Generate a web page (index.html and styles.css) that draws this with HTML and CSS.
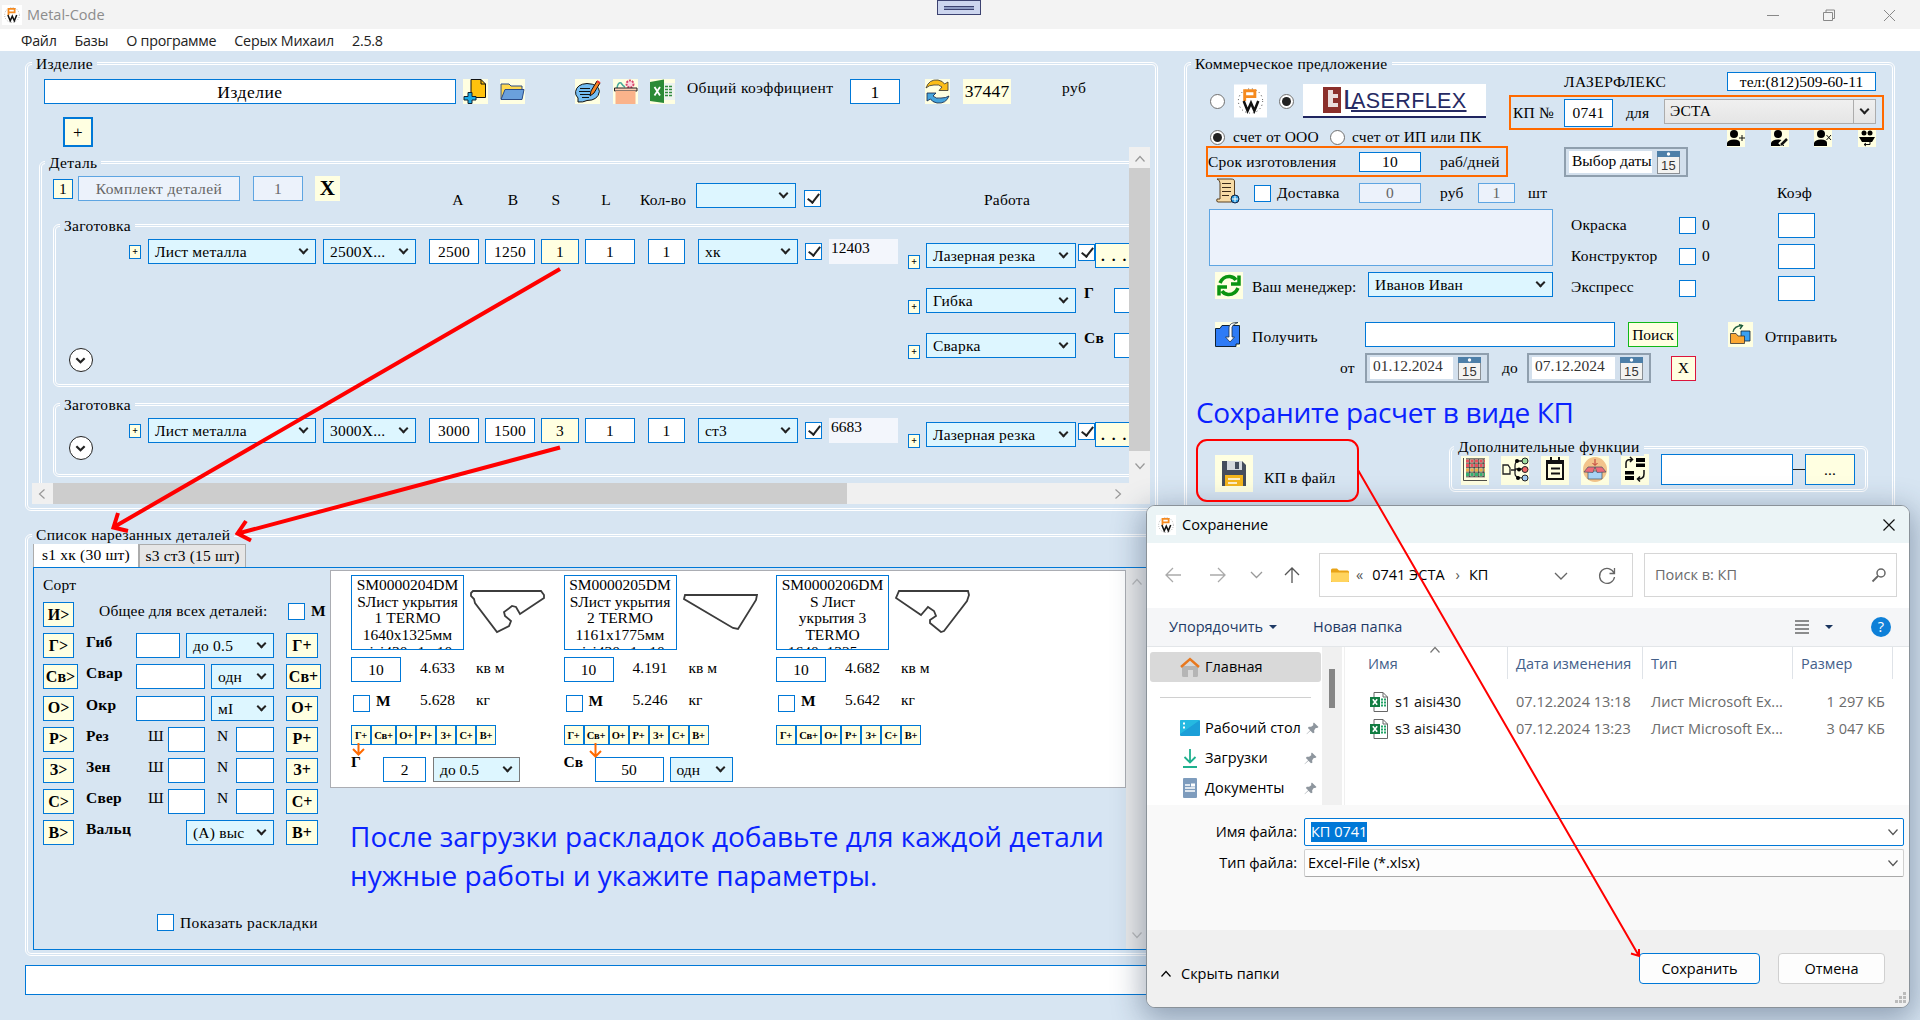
FILE: index.html
```html
<!DOCTYPE html>
<html lang="ru">
<head>
<meta charset="utf-8">
<title>Metal-Code</title>
<link rel="stylesheet" href="styles.css">
</head>
<body>
<svg class="defs" width="0" height="0">
  <defs>
    <symbol id="pw" viewBox="0 0 34 34">
      <rect width="34" height="34" fill="#fff"/>
      <circle cx="17" cy="17" r="12.500" fill="none" stroke="#333" stroke-width="1" stroke-dasharray="1 3"/>
      <path d="M11 17V6.500H21.500V12.500H11" fill="none" stroke="#f58a1f" stroke-width="3"/>
      <path d="M10 17L14 27L17.500 19L21 27L25 17" fill="none" stroke="#111" stroke-width="2.600"/>
    </symbol>
    <symbol id="chev" viewBox="0 0 12 12"><path d="M1.500 3.500L6 8.500L10.500 3.500" fill="none" stroke="currentColor" stroke-width="1.200"/></symbol>
    <symbol id="chev-bold" viewBox="0 0 12 12"><path d="M1.500 4L6 8.500L10.500 4" fill="none" stroke="#222" stroke-width="2.400"/></symbol>
    <symbol id="cal" viewBox="0 0 23 23">
      <rect x=".5" y="3" width="22" height="19.500" fill="#f3f3f1" stroke="#8a8f94"/>
      <rect width="23" height="6" fill="#4d7fa8"/><circle cx="11.500" cy="3" r="1.700" fill="#fff"/>
      <text x="11.500" y="19" text-anchor="middle" class="caltext">15</text>
    </symbol>
    <symbol id="xls" viewBox="0 0 20 20">
      <path d="M4 .5H13L17.500 5V19.500H4Z" fill="#fff" stroke="#666"/><path d="M13 .5V5H17.500" fill="none" stroke="#666"/>
      <path d="M11 7.500H16M11 10.500H16M11 13.500H16" stroke="#21a366" stroke-width="2" stroke-dasharray="2 1"/>
      <rect y="5" width="10" height="10" fill="#107c41"/><path d="M2.800 7.300L7.200 12.700M7.200 7.300L2.800 12.700" stroke="#fff" stroke-width="1.600"/>
    </symbol>
    <symbol id="pin" viewBox="0 0 14 14"><path d="M8.500 .5L13.500 5.500L12 6.500L10.500 6.500L8.800 9L9 11.500L7.500 12L4.700 9.300L1 13L.5 13.300L1 12.500L4.500 9L2 6.500L3 5L5.500 5.200L7.800 3.500L7.700 1.500Z" fill="#8e969e"/></symbol>
    <symbol id="man" viewBox="0 0 18 17"><rect width="18" height="17" fill="#ffffe1"/><circle cx="7" cy="4" r="4"/><path d="M0 16V13Q1 9.500 7 9.500T13 13V16Z"/></symbol>
  </defs>
</svg>

<header class="titlebar">
  <svg class="i20"><use href="#pw"/></svg><span class="app-name">Metal-Code</span>
  <div class="grip"><i></i></div>
  <svg class="wincontrols" viewBox="0 0 134 14"><path d="M2 7.500H14M58.500 4.500H67.500V12.500H58.500ZM61 4V2H69.500V10.500H68M119 2L130 13M130 2L119 13" fill="none" stroke="#888"/></svg>
</header>
<nav class="menubar"><span>Файл</span><span>Базы</span><span>О программе</span><span>Серых Михаил</span><span>2.5.8</span></nav>

<main class="workspace">
  <div class="left">
    <section class="group product">
      <h2 class="legend">Изделие</h2>
      <div class="row toolbar">
        <div class="in w412 big">Изделие</div>
        <svg class="i25" viewBox="0 0 25 25"><rect width="25" height="25" fill="#ffffe1"/><path d="M8 .5H18L22.500 5V18.500H8Z" fill="#ffc20e" stroke="#111"/><path d="M18 .5V5H22.500" fill="none" stroke="#111"/><path d="M5 13.500H9V17.500H13V21H9V24.500H5V21H1V17.500H5Z" fill="#19a9e5" stroke="#123"/></svg>
        <svg class="i25" viewBox="0 0 25 25"><rect width="25" height="25" fill="#ffffe1"/><path d="M1 20V5H9L11 7H22V11" fill="#ffd84f" stroke="#2a4a86"/><path d="M1 20.500L5 10.500H24L22 20.500Z" fill="#6aa0dc" stroke="#2a4a86"/></svg>
        <svg class="i25" viewBox="0 0 25 25"><rect width="25" height="25" fill="#ffffe1"/><path d="M3 23V19Q0 16 .6 12.500Q2 5 12 4.500Q24 5 24.400 12.500Q23 21.500 12 21.500Q8 23.500 3 23Z" fill="#74bdf3" stroke="#111"/><path d="M5 9.500H15M4 12.500H15M5 15.500H15M7 18.500H14" stroke="#111"/><path d="M15 17L16 12L22 2L25 4L19 14Z" fill="#f58220" stroke="#111"/><path d="M22 2L25 4" stroke="#e33" stroke-width="2"/></svg>
        <svg class="i25" viewBox="0 0 25 25"><rect width="25" height="25" fill="#ffffe1"/><path d="M4 9Q5 3 8 4Q10 7 12 8" fill="none" stroke="#47a99a" stroke-width="1.500"/><circle cx="17" cy="5" r="3.500" fill="#fbd5df" stroke="#d8456a" stroke-width="2" stroke-dasharray="2 1"/><path d="M1.500 9H24V12H1.500Z" fill="#fbd0b8" stroke="#222"/><rect x="2.500" y="12" width="20" height="13" fill="#fab38b"/></svg>
        <svg class="i25" viewBox="0 0 25 25"><rect width="25" height="25" fill="#ffffe1"/><rect x="12" y="4" width="13" height="17" fill="#eef3ef"/><path d="M15 7.500H22M15 10.500H22M15 13.500H22M15 16.500H22" stroke="#2f8a3c" stroke-width="1.700" stroke-dasharray="3 1"/><path d="M0 3L14 .5V24L0 22Z" fill="#2b8a36"/><path d="M4.500 8L10 16.500M10 8L4.500 16.500" stroke="#fff" stroke-width="1.800"/></svg>
        <span class="t-coef">Общий коэффициент</span>
        <div class="in w50 big">1</div>
        <svg class="i25" viewBox="0 0 25 25"><rect width="25" height="25" fill="#ffffe1"/><path d="M1 9Q4 0 13 1Q18 2 19.500 5L23 3V11.500H14L17 8Q14 5 9 6Q4 6 1 9Z" fill="#fbbd17" stroke="#333" stroke-width=".8"/><path d="M24 17Q21 25 12 24Q7 23 5.500 20L2 22V14H11L8 17Q11 20 16 19Q21 19 24 17Z" fill="#46a4dc" stroke="#124" stroke-width=".8"/></svg>
        <div class="total">37447</div>
        <span class="up">руб</span>
      </div>
      <div class="addbtn">+</div>
      <div class="scroller">
        <div class="viewport">
          <section class="group detail">
            <h2 class="legend">Деталь</h2>
            <div class="row detail-head">
              <div class="btn num">1</div>
              <div class="in off w162">Комплект деталей</div>
              <div class="in off w50">1</div>
              <div class="xbtn">X</div>
              <span class="col">A</span><span class="col">B</span><span class="col">S</span><span class="col">L</span><span class="col">Кол-во</span>
              <div class="dd w100 low"></div><div class="ck on low"></div>
              <span class="col work-title">Работа</span>
            </div>
            <section class="group blank first">
              <h2 class="legend">Заготовка</h2>
              <div class="blank-main">
                <div class="row sheet">
                  <div class="btn plus">+</div><div class="dd w168">Лист металла</div><div class="dd w93">2500X...</div>
                  <div class="in w50">2500</div><div class="in w50">1250</div><div class="in w38 yel">1</div><div class="in w50">1</div><div class="in w37">1</div>
                  <div class="dd w100">хк</div><div class="ck on"></div><div class="res">12403</div>
                </div>
                <div class="toggle"><svg><use href="#chev-bold"/></svg></div>
              </div>
              <div class="works">
                <div class="row work"><div class="btn plus">+</div><div class="dd w150">Лазерная резка</div><div class="ck on"></div><div class="in yel dots">. . .</div></div>
                <div class="row work alt"><div class="btn plus">+</div><div class="dd w150">Гибка</div><b>Г</b><div class="in w50"></div></div>
                <div class="row work alt"><div class="btn plus">+</div><div class="dd w150">Сварка</div><b>Св</b><div class="in w50"></div></div>
              </div>
            </section>
            <section class="group blank second">
              <h2 class="legend">Заготовка</h2>
              <div class="blank-main">
                <div class="row sheet">
                  <div class="btn plus">+</div><div class="dd w168">Лист металла</div><div class="dd w93">3000X...</div>
                  <div class="in w50">3000</div><div class="in w50">1500</div><div class="in w38 yel">3</div><div class="in w50">1</div><div class="in w37">1</div>
                  <div class="dd w100">ст3</div><div class="ck on"></div><div class="res">6683</div>
                </div>
                <div class="toggle"><svg><use href="#chev-bold"/></svg></div>
              </div>
              <div class="works">
                <div class="row work"><div class="btn plus">+</div><div class="dd w150">Лазерная резка</div><div class="ck on"></div><div class="in yel dots">. . .</div></div>
              </div>
            </section>
          </section>
        </div>
        <div class="vbar"><svg class="up-arrow"><use href="#chev"/></svg><i></i><svg><use href="#chev"/></svg></div>
        <div class="hbar"><svg class="left-arrow"><use href="#chev"/></svg><i></i><svg class="right-arrow"><use href="#chev"/></svg></div>
      </div>
    </section>

    <section class="group parts">
      <h2 class="legend">Список нарезанных деталей</h2>
      <div class="tabs"><div class="tab active">s1 хк (30 шт)</div><div class="tab">s3 ст3 (15 шт)</div></div>
      <div class="tabpage">
        <div class="sort">
          <div class="sort-title">Сорт</div>
          <div class="srow s-all"><div class="btn sb">И&gt;</div><span>Общее для всех деталей:</span><div class="ck"></div><b>М</b></div>
          <div class="srow s-gib"><div class="btn sb">Г&gt;</div><b>Гиб</b><div class="in"></div><div class="dd">до 0.5</div><div class="btn sb">Г+</div></div>
          <div class="srow s-svar"><div class="btn sb wide">Св&gt;</div><b>Свар</b><div class="in"></div><div class="dd">одн</div><div class="btn sb wide">Св+</div></div>
          <div class="srow s-svar"><div class="btn sb">О&gt;</div><b>Окр</b><div class="in"></div><div class="dd">мI</div><div class="btn sb">О+</div></div>
          <div class="srow s-wn"><div class="btn sb">Р&gt;</div><b>Рез</b><span>Ш</span><div class="in"></div><span>N</span><div class="in"></div><div class="btn sb">Р+</div></div>
          <div class="srow s-wn"><div class="btn sb">З&gt;</div><b>Зен</b><span>Ш</span><div class="in"></div><span>N</span><div class="in"></div><div class="btn sb">З+</div></div>
          <div class="srow s-wn"><div class="btn sb">С&gt;</div><b>Свер</b><span>Ш</span><div class="in"></div><span>N</span><div class="in"></div><div class="btn sb">С+</div></div>
          <div class="srow s-val"><div class="btn sb">В&gt;</div><b>Вальц</b><div class="dd">(А) выс</div><div class="btn sb">В+</div></div>
          <div class="layouts"><div class="ck"></div><span>Показать раскладки</span></div>
        </div>
        <div class="cards">
          <article class="card">
            <div class="card-top"><div class="name">SM0000204DM<br>SЛист укрытия<br>1 TERMO<br>1640x1325мм<br>aisi430 s1 n10</div>
              <svg class="shape" viewBox="0 0 75 44"><path d="M1 3L3 1H71L74 5V8L50 24L46 17L42 16L34 22L35 26L41 31L39 36L27 42L5 13L4 9L1 6Z" fill="none" stroke="#3c3c3c" stroke-width="1.800"/></svg></div>
            <div class="crow"><div class="in w50">10</div><span>4.633</span><span>кв м</span></div>
            <div class="crow c2"><div><div class="ck"></div><b>М</b></div><span>5.628</span><span>кг</span></div>
            <div class="ops"><b>Г+</b><b>Св+</b><b>О+</b><b>Р+</b><b>З+</b><b>С+</b><b>В+</b></div>
            <div class="param p-gib"><b>Г</b><div class="in">2</div><div class="dd grey">до 0.5</div></div>
          </article>
          <article class="card">
            <div class="card-top"><div class="name">SM0000205DM<br>SЛист укрытия<br>2 TERMO<br>1161x1775мм<br>aisi430 s1 n10</div>
              <svg class="shape" viewBox="0 0 75 44"><path d="M2 5H74L73 10L55 39L50 38L1 9Z" fill="none" stroke="#3c3c3c" stroke-width="1.800"/></svg></div>
            <div class="crow"><div class="in w50">10</div><span>4.191</span><span>кв м</span></div>
            <div class="crow c2"><div><div class="ck"></div><b>М</b></div><span>5.246</span><span>кг</span></div>
            <div class="ops"><b>Г+</b><b>Св+</b><b>О+</b><b>Р+</b><b>З+</b><b>С+</b><b>В+</b></div>
            <div class="param p-sv"><b>Св</b><div class="in">50</div><div class="dd">одн</div></div>
          </article>
          <article class="card">
            <div class="card-top"><div class="name">SM0000206DM<br>S Лист<br>укрытия 3<br>TERMO<br>1640x1325мм</div>
              <svg class="shape" viewBox="0 0 75 44"><path d="M4 1H73L74 5L72 11L49 41L46 42L35 33V30L41 26L39 21L33 17L26 25L1 8Z" fill="none" stroke="#3c3c3c" stroke-width="1.800"/></svg></div>
            <div class="crow"><div class="in w50">10</div><span>4.682</span><span>кв м</span></div>
            <div class="crow c2"><div><div class="ck"></div><b>М</b></div><span>5.642</span><span>кг</span></div>
            <div class="ops"><b>Г+</b><b>Св+</b><b>О+</b><b>Р+</b><b>З+</b><b>С+</b><b>В+</b></div>
          </article>
        </div>
        <div class="pagebar"><svg class="up-arrow"><use href="#chev"/></svg><svg><use href="#chev"/></svg></div>
      </div>
    </section>
    <div class="status"></div>
  </div>

  <section class="group offer">
    <h2 class="legend">Коммерческое предложение</h2>
    <div class="offer-top">
      <div class="ot-left">
        <div class="row logos"><i class="radio"></i><svg class="pwlogo"><use href="#pw"/></svg><i class="radio on"></i>
          <div class="laser"><svg viewBox="0 0 20 26"><rect width="18" height="26" fill="#8b2f2b"/><path d="M5 3V20H15V16H10V11H15V7H10V3Z" fill="#e9dcdc"/></svg><span class="l">L</span><span>ASERFLEX</span></div></div>
        <div class="row accounts"><i class="radio on"></i><span>счет от ООО</span><i class="radio"></i><span>счет от ИП или ПК</span></div>
        <div class="row term"><span>Срок изготовления</span><div class="in">10</div><span>раб/дней</span></div>
      </div>
      <div class="ot-right">
        <div class="row company"><span>ЛАЗЕРФЛЕКС</span><div class="in">тел:(812)509-60-11</div></div>
        <div class="row number"><span>КП №</span><div class="in">0741</div><span>для</span><div class="combo">ЭСТА<i></i></div></div>
        <div class="row people">
          <svg viewBox="0 0 18 17"><use href="#man"/><path d="M15 5V11M12 8H18" stroke="#111"/></svg>
          <svg viewBox="0 0 18 17"><use href="#man"/><path d="M9 15L16 8" stroke="#ffffe1" stroke-width="5"/><path d="M10 15L16 9" stroke="#111" stroke-width="2.500"/></svg>
          <svg viewBox="0 0 18 17"><use href="#man"/><path d="M12.500 5L17 10M17 5L12.500 10" stroke="#111"/></svg>
          <svg viewBox="0 0 18 17"><rect width="18" height="17" fill="#ffffe1"/><circle cx="6" cy="3" r="2.500"/><circle cx="12" cy="3" r="2.500"/><path d="M1 7H17L14 12H4Z"/><path d="M6 14.500H12V12M8 13L6 14.500L8 16" fill="none" stroke="#111"/></svg>
        </div>
        <div class="picker"><span>Выбор даты</span><svg><use href="#cal"/></svg></div>
      </div>
    </div>
    <div class="offer-mid">
      <div class="om-left">
        <div class="row delivery">
          <svg class="scroll" viewBox="0 0 25 26"><path d="M2 1H16Q20 1 19.500 4V21Q19 24 16 24H3Q1 24 2 21H5V5Q5 2 2 1Z" fill="#f7dba6" stroke="#5a4020"/><path d="M7 5.500H16M7 9.500H16M7 13.500H16M7 17.500H14" stroke="#3b2a18"/><circle cx="20" cy="21" r="4" fill="#2b9be0" stroke="#124"/><path d="M20 18V24M17 21H23" stroke="#fff"/></svg>
          <div class="ck"></div><span>Доставка</span><div class="in off">0</div><span>руб</span><div class="in off">1</div><span>шт</span></div>
        <div class="notes"></div>
        <div class="row manager">
          <svg viewBox="0 0 28 27"><rect width="28" height="27" fill="#ffffe1"/><path d="M5 11Q8 4 15 4.500Q19 5 21 8M24 3.500V12H16M23 16Q20 23 13 22.500Q9 22 7 19M4 23.500V15H12" fill="none" stroke="#0a9410" stroke-width="3.500"/></svg>
          <span>Ваш менеджер:</span><div class="dd">Иванов Иван</div></div>
      </div>
      <div class="om-right">
        <div class="koef">Коэф</div>
        <div class="row extra"><span>Окраска</span><div class="ck"></div><span>0</span><div class="in w37"></div></div>
        <div class="row extra"><span>Конструктор</span><div class="ck"></div><span>0</span><div class="in w37"></div></div>
        <div class="row extra"><span>Экспресс</span><div class="ck"></div><span></span><div class="in w37"></div></div>
      </div>
    </div>
    <div class="row receive">
      <svg class="i25" viewBox="0 0 25 25"><rect width="25" height="25" fill="#ffffe1"/><path d="M.5 6.500H5L7 3.500H24.500V22H21V24.500H.5Z" fill="#2e7bf6" stroke="#123"/><path d="M14 5V15H10.500L15 20L19.500 15H17V5Q18 2 23 .5Q15 0 14 5Z" fill="#fff" stroke="#234" stroke-width=".8"/></svg>
      <span>Получить</span><div class="in"></div><div class="btn find">Поиск</div>
      <svg class="i25" viewBox="0 0 25 25"><rect width="25" height="25" fill="#ffffe1"/><path d="M13 9H22V19H13Z" fill="#3aa0f2" stroke="#123" stroke-width=".8"/><path d="M2.500 11.500H8L10 14H16.500V21.500H2.500Z" fill="#fba733" stroke="#333" stroke-width=".8"/><path d="M5 10Q6 4 14 3.500M11 2.500L14.500 3.500L12 7" fill="none" stroke="#1c5b3c" stroke-width="1.300"/></svg>
      <span>Отправить</span>
    </div>
    <div class="row period"><span>от</span><div class="picker"><span>01.12.2024</span><svg><use href="#cal"/></svg></div><span>до</span><div class="picker"><span>07.12.2024</span><svg><use href="#cal"/></svg></div><div class="btn clear">X</div></div>
    <div class="export">
      <div class="save"><svg viewBox="0 0 38 37"><rect width="38" height="37" fill="#ffffe1"/><path d="M7 6H27L31 10V31H7Z" fill="#454d5c"/><rect x="12" y="6" width="15" height="9" fill="#d5d9dd"/><rect x="20" y="7" width="4" height="7" fill="#454d5c"/><rect x="10" y="20" width="18" height="11" fill="#f4b51d"/><path d="M13 24H25M13 28H22" stroke="#fff" stroke-width="1.500"/></svg><span>КП в файл</span></div>
      <section class="group funcs">
        <h2 class="legend">Дополнительные функции</h2>
        <div class="row func-row">
          <svg viewBox="0 0 28 31"><rect width="28" height="31" fill="#ffffe1"/><path d="M5 7H24M5 11.500H24" stroke="#e8505c" stroke-width="3" stroke-dasharray="3 1.500"/><path d="M5 16H24" stroke="#f0ac45" stroke-width="3" stroke-dasharray="3 1.500"/><path d="M5 20.500H24" stroke="#35b070" stroke-width="3" stroke-dasharray="3 1.500"/><path d="M2.500 4V26.500H26M5 4.800H24M5 9.200H24M5 13.700H24M5 18.200H24M5 22.800H24M8.700 5V23M13.200 5V23M17.700 5V23M22.200 5V23" fill="none" stroke="#222" stroke-width=".8"/></svg>
          <svg viewBox="0 0 28 31"><rect width="28" height="31" fill="#ffffe1"/><path d="M2 11H7L9 14V20H2ZM10 16H15M23 7H17Q14 8 14 12V20Q14 24 23 24M14 15H23" fill="none" stroke="#222" stroke-width="1.300"/><circle cx="24" cy="7" r="3" fill="#a0dfa0" stroke="#222"/><circle cx="24" cy="15.500" r="3" fill="#e66" stroke="#222"/><circle cx="24" cy="24" r="3" fill="#9fc9f0" stroke="#222"/><circle cx="16" cy="7" r="2"/><circle cx="18" cy="15.500" r="2"/><circle cx="17" cy="24" r="2"/></svg>
          <svg viewBox="0 0 28 31"><rect width="28" height="31" fill="#ffffe1"/><path d="M6 7H22V25H6ZM10 3V9M18 3V9M6 9H22M10 14.500H19M10 19.500H19" fill="none" stroke="#111" stroke-width="2"/></svg>
          <svg viewBox="0 0 28 31"><rect width="28" height="31" fill="#ffffe1"/><ellipse cx="14" cy="15.500" rx="12" ry="12.500" fill="#f3c48b"/><path d="M7 17H21V25H7Z" fill="#a8d3f5" stroke="#456" stroke-width=".7"/><path d="M14 13L7 13L3 18L12 18.500ZM14 13H21L25 18L16 18.500Z" fill="#ef6a78" stroke="#456" stroke-width=".7"/><path d="M14 5V11M11.500 9L14 11.500L16.500 9" fill="none" stroke="#b33"/></svg>
          <svg viewBox="0 0 28 31"><rect width="28" height="31" fill="#ffffe1"/><path d="M15 4H24V8H15ZM15 9.500H24V13H15ZM4 17H13V20.500H4ZM4 22H13V26H4Z"/><path d="M5 14V9Q5 5 11 5.500M9 3L11.500 5.500L9 8M23 16V20Q23 25 17 25M19 22.500L16.500 25L19 27.500" fill="none" stroke="#111" stroke-width="1.500"/></svg>
          <div class="in"></div><i class="dash"></i><div class="btn">...</div>
        </div>
      </section>
    </div>
  </section>
</main>

<p class="hint hint-parts">После загрузки раскладок добавьте для каждой детали<br>нужные работы и укажите параметры.</p>
<p class="hint hint-save">Сохраните расчет в виде КП</p>

<section class="dialog">
  <header><svg class="i20"><use href="#pw"/></svg><span>Сохранение</span><svg class="close" viewBox="0 0 12 12"><path d="M.5 .5L11.500 11.500M11.500 .5L.5 11.500" stroke="#111" stroke-width="1.200"/></svg></header>
  <div class="nav">
    <svg class="arrows" viewBox="0 0 136 18"><g fill="none" stroke-width="1.300"><path d="M16 9H1M8 2L1 9L8 16M45 9H60M53 2L60 9L53 16" stroke="#aaa"/><path d="M86 6L91.500 11.500L97 6" stroke="#999"/><path d="M127 17V2M120 9L127 2L134 9" stroke="#555"/></g></svg>
    <div class="addr"><svg viewBox="0 0 18 14"><path d="M0 2Q0 .5 1.500 .5H6L8 2.500H16.500Q18 2.500 18 4V14H0Z" fill="#e8a317"/><path d="M0 4.500H17Q18 4.500 18 5.500V12.500Q18 14 16.500 14H1.500Q0 14 0 12.500Z" fill="#ffd45e"/></svg>
      <span class="sep">«</span><span class="crumb">0741 ЭСТА</span><span class="sep">›</span><span class="crumb">КП</span>
      <svg class="drop" viewBox="0 0 60 18"><path d="M-1 7L5 13L11 7M58 7A7.500 7.500 0 1 0 58.500 11M58.500 2V7.500H53.500" fill="none" stroke="#666" stroke-width="1.300"/></svg></div>
    <div class="search"><span>Поиск в: КП</span><svg viewBox="0 0 14 14"><circle cx="9" cy="5" r="4" fill="none" stroke="#666" stroke-width="1.500"/><path d="M6 8L.5 13.500" stroke="#666" stroke-width="1.800"/></svg></div>
  </div>
  <div class="tools"><span>Упорядочить</span><i class="tri"></i><span class="newf">Новая папка</span>
    <svg class="view" viewBox="0 0 38 14"><path d="M0 1H14M0 5H14M0 9H14M0 13H14" stroke="#222" stroke-width="1.200"/><path d="M30 5H38L34 9Z" fill="#1a355e"/></svg><b class="help">?</b></div>
  <div class="browser">
    <aside>
      <div class="side home"><svg viewBox="0 0 20 20"><path d="M2 9H18V18.500Q18 20 16.500 20H13V13H8V20H3.500Q2 20 2 18.500Z" fill="#b5b5b5"/><path d="M1 10L10 2L19 10" fill="none" stroke="#e8781e" stroke-width="2.400"/></svg>Главная</div>
      <hr>
      <div class="side"><svg viewBox="0 0 20 20"><rect y="2" width="20" height="16" rx="1" fill="#1c9fd8"/><path d="M0 2H20L0 16Z" fill="#2ccbe8" opacity=".6"/><path d="M3 5.500H5M3 9.500H5" stroke="#fff" stroke-width="2"/></svg>Рабочий стол<svg class="pin"><use href="#pin"/></svg></div>
      <div class="side"><svg viewBox="0 0 20 20"><path d="M10 1V14M4.500 9L10 14.500L15.500 9M3 19H17" fill="none" stroke="#1fb08e" stroke-width="1.800"/></svg>Загрузки<svg class="pin"><use href="#pin"/></svg></div>
      <div class="side"><svg viewBox="0 0 20 20"><rect x="3" width="14" height="20" rx="1" fill="#7e9cbd"/><path d="M5 7H10M5 10H15M5 13H15" stroke="#fff" stroke-width="1.400"/><rect x="11" y="5.500" width="4" height="3" fill="#fff"/></svg>Документы<svg class="pin"><use href="#pin"/></svg></div>
    </aside>
    <div class="sidebar-scroll"><i></i></div>
    <div class="files">
      <div class="frow fhead"><span>Имя<svg class="sorted"><use href="#chev"/></svg></span><span>Дата изменения</span><span>Тип</span><span>Размер</span></div>
      <div class="frow"><span><svg class="i20"><use href="#xls"/></svg>s1 aisi430</span><span>07.12.2024 13:18</span><span>Лист Microsoft Ex...</span><span>1 297 КБ</span></div>
      <div class="frow"><span><svg class="i20"><use href="#xls"/></svg>s3 aisi430</span><span>07.12.2024 13:23</span><span>Лист Microsoft Ex...</span><span>3 047 КБ</span></div>
    </div>
  </div>
  <div class="form">
    <label>Имя файла:</label><div class="fld focus"><mark>КП 0741</mark><svg><use href="#chev"/></svg></div>
    <label>Тип файла:</label><div class="fld">Excel-File (*.xlsx)<svg><use href="#chev"/></svg></div>
  </div>
  <footer><svg class="hide"><use href="#chev"/></svg><span>Скрыть папки</span><div class="dbtn primary">Сохранить</div><div class="dbtn">Отмена</div></footer>
  <svg class="corner" viewBox="0 0 12 12"><path d="M8 1.500H11M4 5.500H7M8 5.500H11M0 9.500H3M4 9.500H7M8 9.500H11" stroke="#bbb" stroke-width="3"/></svg>
</section>

<svg class="notes-layer" viewBox="0 0 1920 1020">
  <g fill="none" stroke="#f00" stroke-width="4"><path d="M560 269L114 527M118 513L113.500 527.500L128 531M560 447.500L238 533.500M246 521L237.500 533.500L251 540.500"/></g>
  <rect x="1197" y="440" width="161" height="61" rx="10" fill="none" stroke="#f00" stroke-width="2"/>
  <path d="M1358 470L1639 956M1631 953.500L1639 956L1639 949" fill="none" stroke="#f00" stroke-width="2"/>
  <g fill="none" stroke="#ff6a00" stroke-width="2"><rect x="1510" y="96" width="373" height="33"/><rect x="1207" y="147" width="300" height="29"/>
  <path d="M358.500 743V754.500M353 749L358.500 754.500L364 749M595.500 743V756.500M590 751L595.500 756.500L601 751"/></g>
</svg>
</body>
</html>
```
FILE: styles.css
```css
* { box-sizing: border-box; }
body { margin: 0; width: 1920px; height: 1020px; overflow: hidden; position: relative; background: #d7e5f2; font: 15.5px/18px "Liberation Serif", serif; letter-spacing: .2px; color: #000; white-space: nowrap; }
svg { display: block; overflow: visible; }
.defs { position: absolute; }
h2, p { margin: 0; font-weight: normal; font-size: inherit; }
.i20 { width: 20px; height: 20px; flex: none; }
.i25 { width: 25px; height: 25px; }
.caltext { font: 13px "Liberation Sans", sans-serif; fill: #333; }

.titlebar { height: 29px; background: #f3f3f3; display: flex; align-items: center; padding: 0 21px 0 2px; gap: 5px; font: 14.5px "Open Sans", sans-serif; letter-spacing: 0; color: #8c8c8c; }
.app-name { width: 905px; }
.grip { width: 44px; height: 15px; align-self: flex-start; border: 1px solid #3c4270; background: #ccd5ee; padding: 5px 6px; }
.grip i { display: block; height: 4px; border: solid #3c4270; border-width: 1px 0; background: #8f9cc4; }
.wincontrols { width: 134px; height: 14px; margin-left: auto; }
.menubar { height: 22px; background: #fff; display: flex; gap: 18px; padding-left: 21px; align-items: center; font: 14.3px "Open Sans", sans-serif; letter-spacing: -.25px; color: #222; }

.workspace { height: 969px; display: flex; padding: 11px 25px 0; gap: 26px; }
.left { width: 1133px; display: flex; flex-direction: column; }
.group { position: relative; border: 3px double #fff; border-radius: 6px; }
.legend { position: absolute; top: -10px; left: 4px; padding: 0 4px; background: #d7e5f2; letter-spacing: .32px; }
.row { display: grid; align-items: center; }

.in, .btn { border: 1px solid #0078d7; background: #fff; height: 25px; display: flex; align-items: center; justify-content: center; }
.btn, .yel { background: #ffffe1; }
.in.off { border-color: #5ea5e2; background: #ecf2fb; color: #666; letter-spacing: .45px; }
.big { font-size: 17.5px; letter-spacing: .5px; }
.dd { border: 1px solid #0078d7; background: #ddf6ff; height: 25px; padding: 1px 8px 0 6px; display: flex; align-items: center; justify-content: space-between; }
.dd::after { content: ""; width: 5px; height: 5px; margin: -5px 0 0 auto; border: solid #222; border-width: 0 2px 2px 0; transform: rotate(45deg); }
.dd.grey { border-color: #7a7a7a; }
.ck { width: 17px; height: 17px; border: 1px solid #0078d7; background: #fff; }
.ck.on::after { content: ""; display: block; width: 5px; height: 10px; margin: 0 0 0 5px; border: solid #222; border-width: 0 2.500px 2.500px 0; transform: rotate(38deg); }
.w37 { width: 37px; } .w38 { width: 38px; } .w50 { width: 50px; } .w93 { width: 93px; } .w100 { width: 100px; }
.w150 { width: 150px; } .w162 { width: 162px; } .w168 { width: 168px; } .w412 { width: 412px; }

.product { height: 449px; padding: 14px 4px 0; }
.toolbar { margin-left: 12px; height: 25px; grid-template-columns: 419px 37px 75px 38px 37px 37px 163px 75px 38px 99px 1fr; }
.t-coef, .toolbar .up { margin-top: -7px; letter-spacing: .4px; }
.total { width: 48px; height: 25px; background: #ffffe1; font-size: 17.5px; line-height: 25px; text-align: center; }
.addbtn { width: 30px; height: 30px; margin: 13px 0 0 31px; border: 2px solid #0078d7; background: #ffffe1; text-align: center; line-height: 27px; font-size: 17px; }
.scroller { display: grid; grid-template: 336px 21px / 1097px 21px; }
.viewport { overflow: hidden; padding: 14px 0 0 7px; }
.detail { width: 1400px; height: 400px; padding: 12px 0 0 11px; }
.detail > .legend { left: 3px; }
.detail-head { height: 32px; align-items: start; grid-template-columns: 25px 175px 62px 118px 55px 43px 50px 57px 58px 108px 178px 130px; }
.num { width: 20px; height: 20px; margin-top: 3px; }
.xbtn { width: 25px; height: 25px; background: #ffffe1; font: bold 21px/25px "Liberation Serif", serif; text-align: center; }
.col { width: 50px; text-align: center; margin-top: 15px; }
.low { margin-top: 7px; } .ck.low { margin-top: 14px; }
.blank { width: 1300px; display: flex; }
.blank.first { height: 163px; margin: 16px 0 0 0; }
.blank.second { height: 74px; margin-top: 16px; }
.blank-main { width: 852px; padding-top: 12px; }
.sheet { height: 25px; margin-left: 73px; grid-template-columns: 19px 175px 106px 56px 56px 44px 63px 50px 107px 24px 69px; }
.plus { width: 12px; height: 14px; font-size: 10px; font-weight: bold; letter-spacing: 0; }
.res { height: 25px; background: #f3f6fc; padding-left: 2px; letter-spacing: 0; }
.toggle { width: 24px; height: 24px; margin: 84px 0 0 13px; border: 1.500px solid #222; border-radius: 50%; background: #fff; padding: 5px; }
.toggle svg { width: 11px; height: 12px; }
.second .toggle { margin-top: -7px; }
.works { padding-top: 16px; display: flex; flex-direction: column; gap: 20px; }
.work { height: 25px; align-items: start; grid-template-columns: 18px 152px 17px 60px; }
.work.alt { grid-template-columns: 18px 158px 30px 60px; }
.work .plus { margin-top: 12px; }
.work .ck { margin-top: 1px; }
.work b { margin-top: -4px; }
.dots { width: 60px; font-weight: bold; letter-spacing: 1.500px; justify-content: flex-start; padding-left: 5px; }
.vbar { background: #f0f0f0; display: flex; flex-direction: column; align-items: center; padding: 6px 0 5px; color: #999; }
.vbar svg, .hbar svg, .pagebar svg { width: 12px; height: 12px; }
.vbar i { width: 21px; height: 283px; background: #cdcdcd; margin: 3px 0 9px; }
.up-arrow { transform: rotate(180deg); } .left-arrow { transform: rotate(90deg); } .right-arrow { transform: rotate(-90deg); }
.hbar { grid-column: span 2; background: #f0f0f0; display: flex; align-items: center; padding: 0 26px 0 4px; color: #999; }
.hbar i { width: 794px; height: 21px; margin: 0 auto 0 5px; background: #cdcdcd; }

.parts { margin-top: 23px; height: 422px; padding: 5px 4px 0 5px; }
.parts > .legend { top: -11px; }
.tabs { display: flex; align-items: flex-end; height: 25px; }
.tab { width: 107px; height: 23px; border: 1px solid #acacac; border-bottom: 0; background: #e6e6e6; text-align: center; line-height: 22px; }
.tab.active { width: 106px; height: 25px; background: #fff; line-height: 24px; }
.tabpage { height: 383px; border: 1px solid #0078d7; display: flex; }
.sort { width: 296px; padding: 8px 0 0 9px; }
.sort-title { height: 26px; }
.srow { display: grid; height: 25px; margin-bottom: 6.200px; align-items: center; }
.srow b, .srow span { margin-top: -7px; }
.sb { width: 31px; font-weight: bold; font-size: 16px; letter-spacing: 0; }
.sb.wide { width: 35px; }
.srow .sb:last-child:not(.wide) { width: 32px; }
.s-all { grid-template-columns: 56px 189px 23px 20px; }
.s-all .ck { margin-top: -7px; }
.s-gib { grid-template-columns: 43px 50px 44px 88px 32px; } .s-gib .dd { margin-left: 6px; width: 88px; } .s-gib .sb:last-child { margin-left: 18px; }
.s-svar { grid-template-columns: 43px 50px 69px 63px 32px; } .s-svar .dd { margin-left: 6px; width: 63px; } .s-svar .sb:last-child { margin-left: 18px; }
.s-wn { grid-template-columns: 43px 62px 20px 37px 12px 19px 38px 32px; } .s-wn .in:nth-child(4) { width: 37px; } .s-wn span:nth-child(5) { margin-left: 12px; } .s-wn .in:nth-child(6) { margin-left: 19px; width: 38px; grid-column: span 2; } .s-wn .sb:last-child { margin-left: 12px; }
.s-val { grid-template-columns: 43px 100px 100px 32px; } .s-val .dd { width: 88px; }
.layouts { display: flex; gap: 6px; margin: 69px 0 0 114px; align-items: flex-start; letter-spacing: .4px; }
.cards { width: 796px; height: 218px; margin-top: 2px; border: 1px solid #abadb3; background: #fff; display: flex; padding: 4px 0 0 20px; flex: none; letter-spacing: 0; }
.card { width: 212.500px; }
.card-top { display: flex; gap: 6px; height: 82px; }
.name { width: 113px; height: 75px; border: 1px solid #0078d7; overflow: hidden; text-align: center; line-height: 16.700px; padding-top: 1px; }
.shape { width: 75px; height: 44px; margin-top: 15px; }
.crow { display: grid; grid-template-columns: 69px 56px 60px; height: 38px; align-items: start; }
.crow span { margin-top: 2px; }
.c2 { height: 30px; } .c2 > div { display: flex; gap: 6px; padding-left: 2px; } .c2 span { margin-top: -4px; } .c2 b { margin-top: -3px; }
.ops { display: flex; height: 20px; }
.ops b { width: 20px; border: 1px solid #0078d7; background: #ffffe1; font-size: 10.500px; text-align: center; line-height: 19px; letter-spacing: -.3px; } .ops b:nth-child(2) { width: 25px; }
.param { display: grid; align-items: start; margin-top: 12px; } .param b { margin-top: -4px; }
.p-gib { grid-template-columns: 32px 50px 87px; } .p-gib .in { width: 43px; }
.p-sv { grid-template-columns: 31px 75px 63px; } .p-sv .in { width: 69px; }
.pagebar { width: 22px; background: #eaeaea; display: flex; flex-direction: column; justify-content: space-between; align-items: center; padding: 8px 0; color: #bbb; }
.status { height: 30px; margin-top: 9px; border: 1px solid #0078d7; background: #fff; }

.offer { width: 711px; height: 880px; }
.offer-top { display: flex; height: 112px; }
.ot-left { width: 323px; padding: 19px 0 0 23px; }
.logos { height: 34px; grid-template-columns: 24px 45px 24px 183px; }
.radio { width: 15px; height: 15px; border: 1px solid #707070; border-radius: 50%; background: #fff; display: grid; place-items: center; }
.radio.on::after { content: ""; width: 9px; height: 9px; border-radius: 50%; background: #222; }
.pwlogo { width: 33px; height: 34px; }
.laser { height: 34px; background: #fff; border-bottom: 2px solid #1f2560; display: flex; align-items: center; padding-left: 20px; font: 21.5px "Liberation Sans", sans-serif; color: #262a63; letter-spacing: .4px; }
.laser svg { width: 20px; height: 26px; } .laser .l { font-size: 28px; letter-spacing: 0; width: 8px; } .laser span:last-child { padding-top: 2px; text-decoration: underline; }
.accounts { height: 17px; margin-top: 10px; grid-template-columns: 23px 97px 22px 1fr; }
.term { height: 31px; margin: 1px 0 0 -2px; grid-template-columns: 151px 81px 1fr; } .term .in { width: 62px; height: 20px; }
.ot-right { width: 384px; padding-top: 7px; }
.company { height: 19px; margin-left: 56px; grid-template-columns: 163px 149px; letter-spacing: .4px; } .company .in { height: 19px; letter-spacing: 0; }
.number { height: 35px; margin: 4px 0 0 5px; grid-template-columns: 51px 62px 38px 212px; } .number .in { width: 49px; height: 28px; }
.combo { height: 25px; margin-top: -3px; border: 1px solid #acacac; background: linear-gradient(#f0f0f0, #e5e5e5); padding-left: 5px; display: flex; justify-content: space-between; align-items: center; }
.combo i { width: 22px; height: 23px; border-left: 1px solid #acacac; display: grid; place-items: center; } .combo i::after { content: ""; width: 5px; height: 5px; margin-top: -4px; border: solid #222; border-width: 0 2px 2px 0; transform: rotate(45deg); }
.people { height: 17px; margin-left: 219px; grid-template-columns: repeat(4, 43.700px); } .people svg { width: 18px; height: 17px; }
.picker { width: 124px; height: 30px; border: 2px solid #8f9fae; background: #d3e0ed; display: flex; gap: 5px; padding: 2px 3px; } .picker span { width: 83px; height: 22px; background: #fff; padding-left: 3px; line-height: 20px; letter-spacing: 0; } .picker svg { width: 23px; height: 23px; }
.ot-right > .picker { margin-left: 56px; }
.offer-mid { display: flex; height: 145px; }
.om-left { width: 366px; padding: 1px 0 0 22px; }
.delivery { height: 30px; grid-template-columns: 45px 23px 82px 81px 38px 50px 1fr; } .delivery .scroll { width: 25px; height: 26px; margin: -4px 0 0 6px; } .delivery .in { width: 62px; height: 20px; } .delivery .in:nth-child(6) { width: 37px; }
.notes { height: 57px; margin-top: 1px; border: 1px solid #5ea5e2; background: #ecf2fb; }
.manager { height: 27px; margin: 6px 0 0 6px; align-items: start; grid-template-columns: 37px 116px 185px; } .manager span { margin-top: 6px; } .manager svg { width: 28px; height: 27px; }
.om-right { flex: 1; padding-left: 18px; }
.koef { margin: 7px 0 11px 206px; }
.extra { height: 25px; margin-bottom: 6.300px; grid-template-columns: 108px 23px 76px 37px; } .extra .in { height: 25px; } .extra span { margin-top: -2px; }
.receive { margin-left: 28px; height: 25px; grid-template-columns: 37px 113px 263px 100px 37px 1fr; } .receive .in { width: 250px; } .find { width: 50px; border-color: #0fb818; letter-spacing: 0; } .receive span { padding-top: 4px; }
.period { margin: 6px 0 0 153px; height: 30px; grid-template-columns: 25px 137px 25px 144px 25px; } .period .picker span { color: #333; line-height: 18px; } .clear { border-color: #dc143c; width: 25px; }
.export { display: flex; margin-top: 63px; align-items: flex-start; }
.save { display: flex; width: 262px; padding: 9px 0 0 28px; gap: 11px; } .save svg { width: 38px; height: 37px; } .save span { padding-top: 14px; }
.funcs { width: 419px; height: 46px; padding: 5px 0 0 9px; } .funcs .legend { left: 2px; top: -11px; }
.func-row { height: 31px; grid-template-columns: repeat(5, 40px) 132px 12px 50px; } .func-row svg { width: 28px; height: 31px; } .func-row .in, .func-row .btn { height: 31px; }
.dash { height: 1px; background: #222; }

.hint { position: absolute; color: #0a22ff; font: 28px/39px "Open Sans", sans-serif; }
.hint-parts { left: 350px; top: 817px; letter-spacing: 0; }
.hint-save { left: 1196px; top: 393px; letter-spacing: -.35px; }
.notes-layer { position: absolute; inset: 0; width: 1920px; height: 1020px; }

.dialog { position: absolute; left: 1146px; top: 505px; width: 764px; height: 503px; border: 1px solid #8a9299; border-radius: 9px; background: #fff; box-shadow: 0 8px 30px 4px rgba(40,60,90,.4); font: 14.500px/20px "Open Sans", sans-serif; letter-spacing: 0; }
.dialog header { height: 37px; background: #ebf4f6; border-radius: 8px 8px 0 0; display: flex; align-items: center; padding: 0 14px 0 9px; gap: 6px; } .close { width: 12px; height: 12px; margin-left: auto; }
.nav { height: 65px; display: flex; align-items: center; padding: 0 12px 2px 18px; } .arrows { width: 136px; height: 18px; margin-right: 18px; }
.addr { width: 314px; height: 44px; border: 1px solid #d6d6d6; display: flex; align-items: center; padding: 0 16px 0 11px; gap: 7px; } .addr > svg:first-child { width: 18px; height: 14px; } .crumb { font-weight: 500; margin: 0 4px 0 2px; } .sep { color: #555; } .drop { width: 60px; height: 18px; margin-left: auto; }
.search { width: 253px; height: 44px; margin-left: 11px; border: 1px solid #d6d6d6; display: flex; align-items: center; justify-content: space-between; padding: 0 10px; color: #6b6b6b; } .search svg { width: 14px; height: 14px; }
.tools { height: 39px; background: #f5f6f8; border-bottom: 1px solid #e3e6e9; display: flex; align-items: center; padding: 0 18px 0 22px; color: #1e3a66; } .tri { border: 4px solid transparent; border-top-color: #1e3a66; border-bottom: 0; margin-left: 6px; } .newf { margin-left: 36px; } .view { width: 38px; height: 14px; margin-left: auto; } .help { width: 20px; height: 20px; margin-left: 38px; border-radius: 50%; background: #0e80d8; color: #fff; text-align: center; font-weight: normal; }
.browser { height: 158px; display: flex; }
aside { width: 174px; padding-top: 5px; font-weight: 500; } aside hr { width: 151px; margin: 15px 0 15px 13px; border: 0; border-top: 1px solid #d0d0d0; }
.side { height: 30px; margin-left: 3px; display: flex; align-items: center; padding-left: 30px; gap: 5px; width: 171px; } .side svg { width: 20px; height: 20px; flex: none; } .home { background: #d9d9d9; border-radius: 3px; } .side .pin { width: 13px; height: 13px; margin: 0 4px 0 auto; }
.sidebar-scroll { width: 20px; background: #f0f0f0; padding: 22px 7px; margin-left: 1px; } .sidebar-scroll i { display: block; width: 6px; height: 39px; background: #868686; }
.files { margin-left: 2px; border-left: 1px solid #f0f0f0; padding-left: 16px; color: #6b6b6b; }
.frow { display: grid; grid-template-columns: 147px 135px 150px 92px; height: 27px; align-items: center; } .frow > span { padding-left: 8px; } .frow > span:first-child { display: flex; gap: 5px; color: #111; font-weight: 500; padding-left: 9px; } .frow > span:last-child { text-align: right; }
.frow.fhead { height: 32px; margin-bottom: 9px; color: #44608a; grid-template-columns: 147px 135px 150px 100px; } .fhead > span { border-right: 1px solid #dfe3e8; height: 32px; line-height: 34px; } .frow.fhead > span:first-child { color: #44608a; padding-left: 7px; font-weight: normal; } .frow.fhead > span:last-child { text-align: left; }
.sorted { width: 12px; height: 12px; transform: rotate(180deg); margin: -3px 0 0 26px; color: #777; }
.form { height: 125px; background: #f9f9f9; display: grid; grid-template: 28px 28px / 150px 600px; gap: 3px 7px; padding-top: 13px; align-items: center; } .form label { text-align: right; }
.fld { height: 28px; border: 1px solid #cfcfcf; border-bottom-color: #aaa; background: #fdfdfd; border-radius: 2px; display: flex; align-items: center; justify-content: space-between; padding: 0 4px 0 3px; } .focus { border-color: #0078d7; background: #fff; } .fld svg { width: 12px; height: 12px; color: #555; } mark { background: #0078d7; color: #fff; margin-left: 3px; }
footer { height: 77px; background: #f0f0f0; border-radius: 0 0 8px 8px; display: flex; padding: 0 24px 0 13px; align-items: center; } footer .hide { width: 12px; height: 12px; transform: rotate(180deg); margin-right: 9px; margin-top: 10px; } footer span { padding-top: 10px; font-weight: 500; }
.dbtn { width: 107px; height: 31px; margin: 0 0 0 18px; border: 1px solid #d0d0d0; border-radius: 4px; background: #fdfdfd; text-align: center; line-height: 29px; } .primary { width: 121px; margin-left: auto; border-color: #0078d7; }
.corner { position: absolute; right: 2px; bottom: 3px; width: 12px; height: 12px; }
```
